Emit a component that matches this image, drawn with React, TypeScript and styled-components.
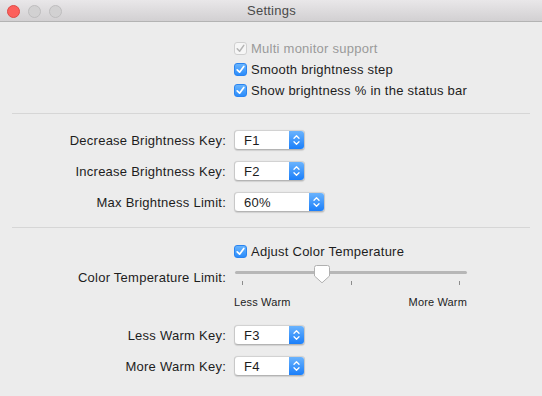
import styled, { createGlobalStyle } from 'styled-components';

const GlobalStyle = createGlobalStyle`
  html, body {
    margin: 0;
    padding: 0;
    background: #ececec;
  }
  body {
    font-family: 'Liberation Sans', Arial, sans-serif;
    -webkit-font-smoothing: antialiased;
  }
`;

const Window = styled.div`
  width: 542px;
  height: 396px;
  background: #ececec;
  overflow: hidden;
  color: #1d1d1d;
  font-size: 13px;
  letter-spacing: 0.25px;
`;

const TitleBar = styled.div`
  position: relative;
  height: 21px;
  border-bottom: 1px solid #b3b3b3;
  background: linear-gradient(#e9e7e9, #d2d0d2);
  display: flex;
  align-items: center;
  justify-content: center;
`;

const Lights = styled.div`
  position: absolute;
  left: 7px;
  top: 5px;
  display: flex;
  gap: 8px;
`;

const Light = styled.span<{ $red?: boolean }>`
  width: 11px;
  height: 11px;
  border-radius: 50%;
  background: ${(p) => (p.$red ? '#fc605c' : '#d2d1d2')};
  border: 0.5px solid ${(p) => (p.$red ? '#de4a46' : '#bebdbe')};
`;

const Title = styled.div`
  font-size: 13px;
  color: #4a4a4a;
  margin-left: 1px;
`;

const Content = styled.div`
  padding: 16px 12px 0 12px;
`;

const CheckList = styled.div`
  display: flex;
  flex-direction: column;
  gap: 1px;
  padding-left: 222px;
`;

const CheckRow = styled.label<{ $disabled?: boolean }>`
  height: 20px;
  display: flex;
  align-items: center;
  gap: 4px;
  color: ${(p) => (p.$disabled ? '#9a9a9a' : '#1d1d1d')};
`;

const Box = styled.span<{ $disabled?: boolean }>`
  width: 13px;
  height: 13px;
  border-radius: 3px;
  box-sizing: border-box;
  display: flex;
  align-items: center;
  justify-content: center;
  background: ${(p) =>
    p.$disabled ? '#f6f6f6' : 'linear-gradient(#68b4fd, #2b8cfb)'};
  border: 1px solid ${(p) => (p.$disabled ? '#d0d0d0' : '#2a84f0')};
`;

const Divider = styled.div<{ $top: number; $bottom: number }>`
  height: 1px;
  background: #d6d6d6;
  margin-top: ${(p) => p.$top}px;
  margin-bottom: ${(p) => p.$bottom}px;
`;

const Rows = styled.div<{ $gap: number }>`
  display: flex;
  flex-direction: column;
  gap: ${(p) => p.$gap}px;
`;

const Row = styled.div`
  display: flex;
  align-items: center;
  height: 22px;
`;

const Label = styled.div`
  width: 214px;
  text-align: right;
  margin-right: 8px;
  white-space: nowrap;
`;

const Popup = styled.div<{ $w: number }>`
  width: ${(p) => p.$w}px;
  height: 20px;
  box-sizing: border-box;
  display: flex;
  align-items: stretch;
  background: #fff;
  border-radius: 4px;
  border: 1px solid #c8c8c8;
  border-top-color: #d2d2d2;
  border-bottom-color: #b4b4b4;
  box-shadow: 0 0.5px 1px rgba(0, 0, 0, 0.12);
  overflow: hidden;
`;

const PopupValue = styled.div`
  flex: 1;
  padding-left: 9px;
  display: flex;
  align-items: center;
  color: #1d1d1d;
`;

const PopupArrows = styled.div`
  width: 15px;
  display: flex;
  align-items: center;
  justify-content: center;
  background: linear-gradient(#6ab3fd, #1b7ffa);
`;

const SliderRow = styled.div`
  display: flex;
  align-items: flex-start;
  margin-top: 2px;
`;

const SliderLabel = styled(Label)`
  margin-top: 7px;
`;

const SliderCol = styled.div`
  width: 233px;
`;

const TrackArea = styled.div`
  position: relative;
  height: 22px;
`;

const Track = styled.div`
  position: absolute;
  left: 1px;
  right: 0;
  top: 8px;
  height: 3px;
  border-radius: 2px;
  background: #b7b7b7;
`;

const Knob = styled.svg`
  position: absolute;
  top: 2px;
`;

const Ticks = styled.div`
  position: absolute;
  left: 8px;
  right: 7px;
  top: 18px;
  display: flex;
  justify-content: space-between;
`;

const Tick = styled.span`
  width: 1px;
  height: 4px;
  background: #8c8c8c;
`;

const ScaleLabels = styled.div`
  display: flex;
  justify-content: space-between;
  font-size: 11px;
  line-height: 14px;
  letter-spacing: 0.15px;
  margin-top: 10px;
`;

function Check() {
  return (
    <svg width="9" height="9" viewBox="0 0 9 9">
      <path
        d="M1.2 4.8 L3.6 7.2 L7.8 1.4"
        fill="none"
        stroke="#fff"
        strokeWidth="1.7"
        strokeLinecap="round"
        strokeLinejoin="round"
      />
    </svg>
  );
}

function CheckBox({ label, disabled }: { label: string; disabled?: boolean }) {
  return (
    <CheckRow $disabled={disabled}>
      <Box $disabled={disabled}>
        {disabled ? (
          <svg width="9" height="9" viewBox="0 0 9 9">
            <path
              d="M1.2 4.8 L3.6 7.2 L7.8 1.4"
              fill="none"
              stroke="#b4b4b4"
              strokeWidth="1.5"
              strokeLinecap="round"
              strokeLinejoin="round"
            />
          </svg>
        ) : (
          <Check />
        )}
      </Box>
      {label}
    </CheckRow>
  );
}

function Select({ value, width = 71 }: { value: string; width?: number }) {
  return (
    <Popup $w={width}>
      <PopupValue>{value}</PopupValue>
      <PopupArrows>
        <svg width="7" height="12" viewBox="0 0 7 12">
          <path
            d="M1 4.3 L3.5 1.8 L6 4.3 M1 7.7 L3.5 10.2 L6 7.7"
            fill="none"
            stroke="#fff"
            strokeWidth="1.3"
            strokeLinecap="round"
            strokeLinejoin="round"
          />
        </svg>
      </PopupArrows>
    </Popup>
  );
}

function Field({ label, value, width }: { label: string; value: string; width?: number }) {
  return (
    <Row>
      <Label>{label}</Label>
      <Select value={value} width={width} />
    </Row>
  );
}

const knobPos = 0.37;

export default function App() {
  return (
    <Window>
      <GlobalStyle />
      <TitleBar>
        <Lights>
          <Light $red />
          <Light />
          <Light />
        </Lights>
        <Title>Settings</Title>
      </TitleBar>
      <Content>
        <CheckList>
          <CheckBox label="Multi monitor support" disabled />
          <CheckBox label="Smooth brightness step" />
          <CheckBox label="Show brightness % in the status bar" />
        </CheckList>
        <Divider $top={13} $bottom={15} />
        <Rows $gap={9}>
          <Field label="Decrease Brightness Key:" value="F1" />
          <Field label="Increase Brightness Key:" value="F2" />
          <Field label="Max Brightness Limit:" value="60%" width={91} />
        </Rows>
        <Divider $top={14} $bottom={13} />
        <CheckList>
          <CheckBox label="Adjust Color Temperature" />
        </CheckList>
        <SliderRow>
          <SliderLabel>Color Temperature Limit:</SliderLabel>
          <SliderCol>
            <TrackArea>
              <Track />
              <Ticks>
                <Tick />
                <Tick />
                <Tick />
              </Ticks>
              <Knob
                width="16"
                height="19"
                viewBox="0 0 16 19"
                style={{ left: 8 + knobPos * 217 - 8 }}
              >
                <path
                  d="M2.5 0.5 H13.5 a2 2 0 0 1 2 2 V11 L8 17.8 L0.5 11 V2.5 a2 2 0 0 1 2 -2 Z"
                  fill="#fff"
                  stroke="#b0b0b0"
                  strokeWidth="1"
                />
              </Knob>
            </TrackArea>
            <ScaleLabels>
              <span>Less Warm</span>
              <span>More Warm</span>
            </ScaleLabels>
          </SliderCol>
        </SliderRow>
        <Rows $gap={9} style={{ marginTop: 15 }}>
          <Field label="Less Warm Key:" value="F3" />
          <Field label="More Warm Key:" value="F4" />
        </Rows>
      </Content>
    </Window>
  );
}
